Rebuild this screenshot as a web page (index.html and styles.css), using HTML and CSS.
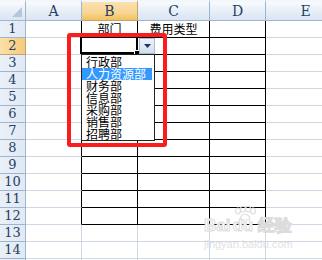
FILE: index.html
```html
<!DOCTYPE html>
<html lang="zh">
<head>
  <meta charset="UTF-8" />
  <title>数据有效性</title>
  <link rel="stylesheet" href="styles.css">
</head>
<body>
  <div class="sheet">
    <div class="grid" id="grid"></div>

    <!-- active cell + dropdown -->
    <div class="active"><span class="handle"></span></div>
    <div class="dropbtn"><svg width="7" height="4" viewBox="0 0 7 4"><path d="M0 0h7L3.5 4z" fill="#1d3466"/></svg></div>
    <ul class="list">
      <li>行政部</li>
      <li class="sel">人力资源部</li>
      <li>财务部</li>
      <li>信息部</li>
      <li>采购部</li>
      <li>销售部</li>
      <li>招聘部</li>
    </ul>
    <div class="mark"></div>

    <div class="wm">
      <svg class="paw" width="26" height="16" viewBox="0 0 26 16">
        <g fill="none" stroke="#dedede" stroke-width="1.2">
          <ellipse cx="6" cy="5" rx="2.5" ry="3"/>
          <ellipse cx="11" cy="3" rx="2.5" ry="3"/>
          <ellipse cx="16" cy="3" rx="2.5" ry="3"/>
          <ellipse cx="21" cy="5" rx="2.5" ry="3"/>
          <path d="M8 14c0-4 3-6 5-6s5 2 5 6z"/>
        </g>
      </svg>
      <div class="wm-logo">Bai<span class="du">du</span> 经验</div>
      <div class="wm-url">jingyan.baidu.com</div>
    </div>
  </div>

  <script>
    const grid = document.getElementById('grid');
    const cols = ['', 'A', 'B', 'C', 'D', 'E'];
    const top1 = { 2: '部门', 3: '费用类型' };

    cols.forEach((c, i) => {
      const h = document.createElement('div');
      h.className = i === 0 ? 'cell corner' : 'cell colhead' + (c === 'B' ? ' on' : '');
      h.textContent = c;
      grid.appendChild(h);
    });

    for (let r = 1; r <= 15; r++) {
      const rh = document.createElement('div');
      rh.className = 'cell rowhead' + (r === 2 ? ' on' : '');
      // row 15 only peeks in at the bottom edge
      if (r < 15) rh.textContent = r;
      grid.appendChild(rh);
      for (let i = 1; i < cols.length; i++) {
        const d = document.createElement('div');
        let cls = 'cell';
        if (r <= 12 && i >= 2 && i <= 4) cls += ' box';
        if (r <= 12 && i === 1) cls += ' edge';
        d.className = cls;
        if (r === 1 && top1[i]) d.textContent = top1[i];
        grid.appendChild(d);
      }
    }
  </script>
</body>
</html>
```

FILE: styles.css
```css
body {
  margin: 0;
  overflow: hidden;
  background: white;
  font-family: "Noto Sans CJK SC", sans-serif;
}
.sheet {
  position: relative;
  width: 322px;
  height: 260px;
  overflow: hidden;
}
.grid {
  display: grid;
  grid-template-columns: 26px 56px 56px 72px 56px 80px;
  grid-template-rows: 21px repeat(15, 17px);
}
.cell {
  box-sizing: border-box;
  border-right: 1px solid #d0d7e5;
  border-bottom: 1px solid #d0d7e5;
  font-size: 12px;
  line-height: 16px;
  text-align: center;
  color: #000;
}
.corner, .colhead {
  background: linear-gradient(#f9fbfd, #e4ecf7 60%, #dbe5f2);
  border-right: 1px solid #9eb6ce;
  border-bottom: 1px solid #9eb6ce;
  border-top: 2px solid #f3f6fa;
}
.corner {
  position: relative;
}
.corner::after {
  content: "";
  position: absolute;
  right: 3px;
  bottom: 3px;
  border-left: 10px solid transparent;
  border-bottom: 10px solid #b7c7da;
}
.colhead {
  font-family: "DejaVu Serif", serif;
  font-size: 14px;
  line-height: 18px;
  color: #27415f;
}
.colhead.on {
  background: linear-gradient(#fbe2b0, #f8d592 60%, #f1c15f);
  border-right-color: #c2a56e;
  border-bottom-color: #c2a56e;
}
.rowhead {
  background: linear-gradient(90deg, #eaf0f8, #e1e9f5);
  border-right: 1px solid #9eb6ce;
  border-bottom: 1px solid #9eb6ce;
  font-family: "DejaVu Serif", serif;
  font-size: 13px;
  color: #27415f;
}
.rowhead.on {
  background: linear-gradient(90deg, #fbe0aa, #f5ca7b);
  border-right-color: #c2a56e;
  border-bottom-color: #c2a56e;
}
.box {
  border-right-color: #000;
  border-bottom-color: #000;
}
.edge {
  border-right-color: #000;
}

.active {
  position: absolute;
  left: 80px;
  top: 36px;
  width: 54px;
  height: 14px;
  border: 2px solid #000;
  background: white;
}
.handle {
  position: absolute;
  right: -4px;
  bottom: -4px;
  width: 4px;
  height: 4px;
  background: #000;
  border: 1px solid white;
}
.dropbtn {
  position: absolute;
  left: 139px;
  top: 38px;
  width: 14px;
  height: 14px;
  border: 1px solid #a9bad3;
  background: linear-gradient(#eef3fa, #d3deee);
  display: flex;
  align-items: center;
  justify-content: center;
}
.list {
  position: absolute;
  left: 81px;
  top: 54px;
  width: 72px;
  height: 84px;
  margin: 0;
  padding: 1px 0 0;
  list-style: none;
  background: white;
  border: 1px solid #222;
}
.list li {
  height: 12px;
  line-height: 12px;
  font-size: 12px;
  padding-left: 4px;
  margin-right: 2px;
  color: #000;
}
.list li.sel {
  background: #3399ff;
  color: white;
}
.mark {
  position: absolute;
  left: 67px;
  top: 33px;
  width: 92px;
  height: 106px;
  border: 4px solid #fb1c1c;
  border-radius: 3px;
}

.wm {
  position: absolute;
  left: 204px;
  top: 206px;
  width: 90px;
}
.paw {
  display: block;
  margin-left: 28px;
}
.wm-logo {
  margin-top: -4px;
  font-family: "Liberation Sans", sans-serif;
  font-weight: bold;
  font-size: 17px;
  line-height: 16px;
  color: white;
  -webkit-text-stroke: 1px #dcdcdc;
  white-space: nowrap;
}
.wm-logo .du {
  margin-left: 2px;
}
.wm-url {
  margin-top: 4px;
  font-family: "Liberation Sans", sans-serif;
  font-size: 11px;
  color: #e2e2e2;
  white-space: nowrap;
}
```
